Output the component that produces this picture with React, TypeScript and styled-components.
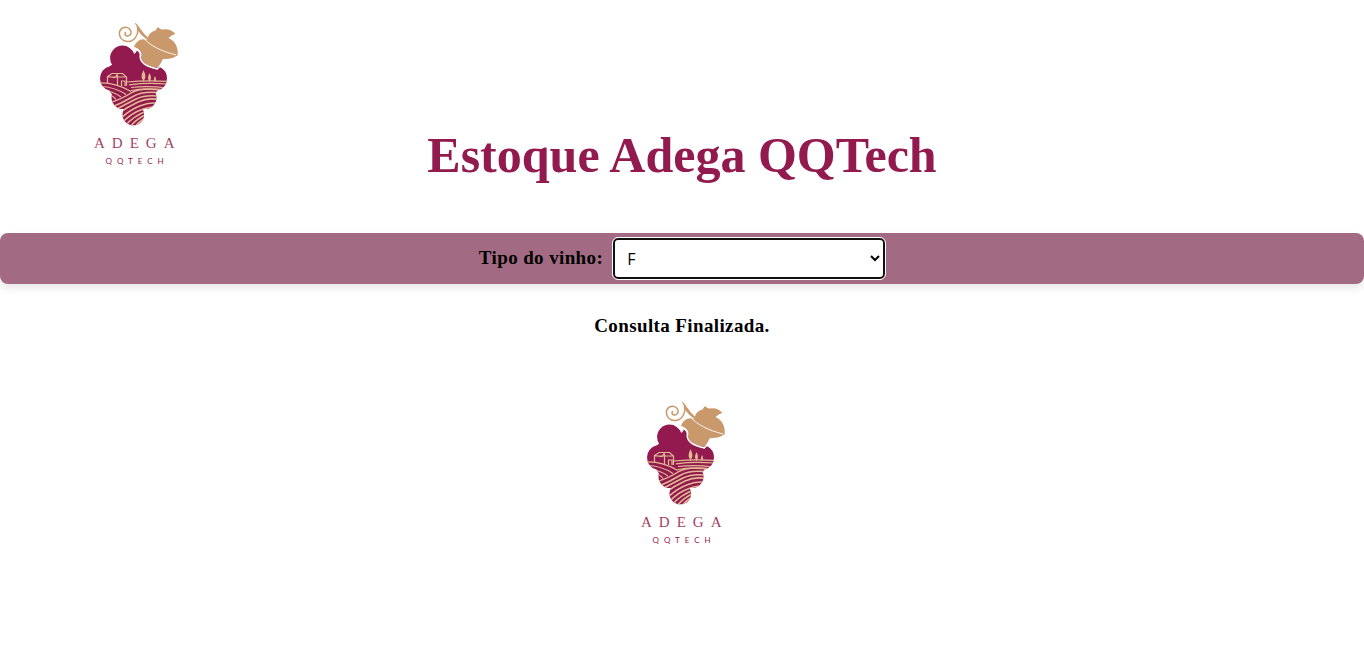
import React, { useState } from "react";
import styled, { createGlobalStyle } from "styled-components";

const wine = "#931a4e";
const tan = "#c9996b";
const sand = "#e3b994";

const GlobalStyle = createGlobalStyle`
  * { box-sizing: border-box; }
  body {
    margin: 0;
    background: #fff;
    color: #000;
    font-family: "Liberation Serif", "Times New Roman", serif;
  }
`;

const Header = styled.header`
  display: grid;
  grid-template-columns: 1fr auto 1fr;
  align-items: end;
  padding: 15px 0 50px;
`;

const HeaderLogo = styled.a`
  display: block;
  justify-self: start;
  margin: 0 0 13px 85px;
`;

const Title = styled.h1`
  margin: 0;
  color: ${wine};
  font-size: 50px;
  line-height: 56px;
`;

const FilterBar = styled.form`
  display: flex;
  align-items: center;
  justify-content: center;
  gap: 10px;
  padding: 5px;
  border-radius: 8px;
  background: #a36b83;
  box-shadow: 0 4px 8px rgba(0, 0, 0, 0.1);
`;

const Label = styled.label`
  font-size: 19px;
  font-weight: bold;
  line-height: 24px;
  letter-spacing: 0.02em;
  padding-bottom: 2px;
`;

const Select = styled.select`
  width: 272px;
  height: 41px;
  padding: 0 8px;
  border: 2px solid #101010;
  border-radius: 5px;
  outline: 1px solid #fff;
  background: #fff;
  color: #000;
  font-family: "Open Sans", sans-serif;
  font-size: 16px;
`;

const Result = styled.main`
  display: flex;
  flex-direction: column;
  align-items: center;
  gap: 56px;
  padding-top: 30px;
`;

const Message = styled.p`
  margin: 0;
  font-size: 19px;
  font-weight: bold;
  line-height: 24px;
  letter-spacing: 0.02em;
`;

const LogoSvg = styled.svg`
  display: block;
  width: 100px;
  height: 155px;
`;

const LogoName = styled.text`
  font-family: "Liberation Serif", serif;
  font-size: 15px;
  letter-spacing: 7px;
  fill: ${wine};
  opacity: 0.85;
`;

const LogoSub = styled.text`
  font-family: Lato, sans-serif;
  font-size: 8px;
  letter-spacing: 5px;
  fill: ${wine};
`;

function Logo({ id }: { id: string }) {
  return (
    <LogoSvg viewBox="0 0 100 155" role="img" aria-label="Adega QQTech">
      <defs>
        <clipPath id={id}>
          <circle cx="37.5" cy="43" r="12.4" />
          <circle cx="27.5" cy="63.5" r="12.5" />
          <circle cx="69.5" cy="63.5" r="12.5" />
          <circle cx="38" cy="82.5" r="11.5" />
          <circle cx="60" cy="82.5" r="11.5" />
          <circle cx="48.3" cy="99.5" r="10.8" />
          <path d="M25 51 44 40 49 39Q51.5 38 52 35L56 38 76 53 72 76 62 93H36L24 75Z" />
        </clipPath>
      </defs>
      <g clipPath={`url(#${id})`}>
        <rect x="10" y="28" width="76" height="84" fill={wine} />
        <g fill="none" stroke={sand} strokeWidth="1.2">
          <path d="M22.5 68V61.500L27 58.500H37.500L41.500 62V71M22 61.500L30 62.500 32.500 59M32.500 60V70M22.500 62H41.500M36.500 71v-5h3.500v5" />
          <path d="M42 67q20-2 42-.5M44 69.8q18-2.5 38-.8M46 72.500q17-2 36 .5M46 75.500q16-3 34 .3" />
          <path d="M13 68q17-1 33 8.500M14 71.500q15 0 27 8M16 75q12 1 20 7M22 79q7 2 9 5.500" />
        </g>
        <g fill="none" stroke={sand} strokeWidth="1.5">
          <path d="M24 88Q37 84 46 78T80 75" />
          <path d="M25 93Q37 88 48 81.500T79 78.500" />
          <path d="M30 95Q41 89 51 84T77 81.500" />
          <path d="M33 99Q42 92 53 87T75 85" />
          <path d="M36 103Q46 94 56 90.500T74 88.500" />
          <path d="M37 108Q46 98 57 94.500T72 92" />
          <path d="M40 111Q48 101 63 95.500" />
          <path d="M44 113Q51 104 62 99" />
          <path d="M49 113Q53 107 61 103" />
        </g>
        <g fill={sand}>
          <path d="M58.5 55q-3.800 8 0 10.500 3.800-2.500 0-10.500ZM64.500 58q-3 6 0 8 3-2 0-8ZM70 61q-2 4 0 5.500 2-1.500 0-5.500Z" />
          <path d="M58.100 64h.8v3h-.8ZM64.100 65h.8v2h-.8ZM69.700 65h.7v2h-.7Z" />
        </g>
      </g>
      <path
        d="M49 32C51 26 56 22.500 63 25 62.500 20 66 16.500 70.500 15.500Q71.500 13.500 73 12Q75.500 15 78.500 14.500C83 13.500 87.500 15.500 90.500 19 87 20 85.500 21.500 83.500 23 90 26 93.500 32 92.700 40.300 88 43.500 83 44.500 78 44Q76 48.500 72.500 53C64 51 56.500 49 56 41.500 57.500 37 53 33 49 32Z"
        fill={tan}
      />
      <path d="M48.500 33C53 34 57 38 55.200 42 56 49.500 64 52 72.300 54 75.500 51 77.500 48.500 78.700 45" fill="none" stroke="#fff" strokeWidth="1.6" />
      <path d="M57 21.500C65 31 76 36 91 40" fill="none" stroke="#fff" strokeWidth="0.9" />
      <path d="M49.500 7.500q3 1 4.500 4.500 4.500 7 11 12.500l-1.500 1Q55 20 52.500 14.500 51.500 10 49.500 7.500Z" fill={tan} />
      <path
        d="M52.5 12C54 20 49 27 42.500 26.500 34 25.500 32 16.500 37.500 13 43 10.500 47.500 15.500 45.500 19.500 43 22.500 38.500 20.500 40.500 17.500"
        fill="none"
        stroke={tan}
        strokeWidth="1.5"
        strokeLinecap="round"
      />
      <LogoName x="9" y="133">ADEGA</LogoName>
      <LogoSub x="20.5" y="149">QQTECH</LogoSub>
    </LogoSvg>
  );
}

export default function App() {
  const [type, setType] = useState("F");
  return (
    <>
      <GlobalStyle />
      <Header>
        <HeaderLogo href="#"><Logo id="grapes-header" /></HeaderLogo>
        <Title>Estoque Adega QQTech</Title>
      </Header>
      <FilterBar>
        <Label htmlFor="wine-type">Tipo do vinho:</Label>
        <Select id="wine-type" value={type} onChange={(e) => setType(e.target.value)}>
          <option value="F">F</option>
        </Select>
      </FilterBar>
      <Result>
        <Message>Consulta Finalizada.</Message>
        <Logo id="grapes-result" />
      </Result>
    </>
  );
}
